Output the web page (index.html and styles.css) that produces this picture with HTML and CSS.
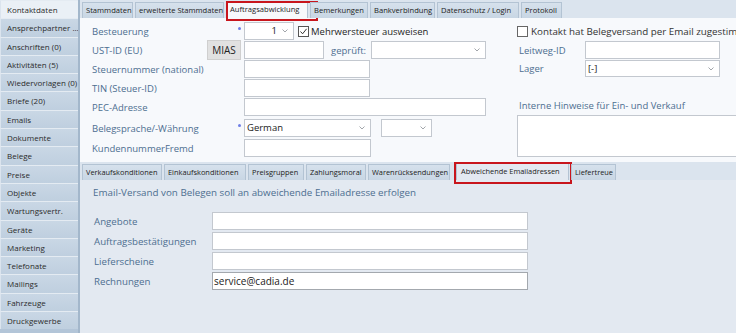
FILE: index.html
```html
<!DOCTYPE html>
<html>
<head>
    <title>Kontaktdaten - Auftragsabwicklung</title>
    <link rel="stylesheet" href="styles.css">
</head>
<body>
    <div class="app">
        <nav class="sidebar">
            <div class="side-item active">Kontaktdaten</div>
            <div class="side-item">Ansprechpartner ...</div>
            <div class="side-item">Anschriften (0)</div>
            <div class="side-item">Aktivitäten (5)</div>
            <div class="side-item">Wiedervorlagen (0)</div>
            <div class="side-item">Briefe (20)</div>
            <div class="side-item">Emails</div>
            <div class="side-item">Dokumente</div>
            <div class="side-item">Belege</div>
            <div class="side-item">Preise</div>
            <div class="side-item">Objekte</div>
            <div class="side-item">Wartungsvertr.</div>
            <div class="side-item">Geräte</div>
            <div class="side-item">Marketing</div>
            <div class="side-item">Telefonate</div>
            <div class="side-item">Mailings</div>
            <div class="side-item">Fahrzeuge</div>
            <div class="side-item">Druckgewerbe</div>
        </nav>

        <main class="main">
            <div class="tabs top-tabs">
                <div class="tab tw-51">Stammdaten</div>
                <div class="tab tw-89">erweiterte Stammdaten</div>
                <div class="tab tw-82 selected marked-top">Auftragsabwicklung</div>
                <div class="tab tw-58">Bemerkungen</div>
                <div class="tab tw-65">Bankverbindung</div>
                <div class="tab tw-82">Datenschutz / Login</div>
                <div class="tab tw-41">Protokoll</div>
            </div>

            <section class="panel-top">
                <div class="form-left">
                    <div class="row">
                        <div class="label">Besteuerung</div>
                        <div class="mark"><span class="dot"></span></div>
                        <div class="select w-50 num">1<span class="chev"><svg width="6" height="4" viewBox="0 0 6 4"><path d="M0.5 0.5 L3 3 L5.5 0.5" fill="none" stroke="#8a8f96" stroke-width="0.8"/></svg></span></div>
                        <label class="check dark"><span class="box"><svg width="9" height="9" viewBox="0 0 9 9"><path d="M1.5 4.5 L3.6 6.8 L7.6 1.8" fill="none" stroke="#333" stroke-width="1"/></svg></span>Mehrwersteuer ausweisen</label>
                    </div>
                    <div class="row">
                        <div class="label with-btn">UST-ID (EU)<button class="mias">MIAS</button></div>
                        <div class="mark"></div>
                        <div class="input w-80"></div>
                        <span class="inline-label">geprüft:</span>
                        <div class="select w-115"><span class="chev"><svg width="6" height="4" viewBox="0 0 6 4"><path d="M0.5 0.5 L3 3 L5.5 0.5" fill="none" stroke="#8a8f96" stroke-width="0.8"/></svg></span></div>
                    </div>
                    <div class="row">
                        <div class="label">Steuernummer (national)</div>
                        <div class="mark"></div>
                        <div class="input w-126"></div>
                    </div>
                    <div class="row">
                        <div class="label">TIN (Steuer-ID)</div>
                        <div class="mark"></div>
                        <div class="input w-126"></div>
                    </div>
                    <div class="row">
                        <div class="label">PEC-Adresse</div>
                        <div class="mark"></div>
                        <div class="input w-242"></div>
                    </div>
                    <div class="row spaced">
                        <div class="label">Belegsprache/-Währung</div>
                        <div class="mark"><span class="dot"></span></div>
                        <div class="select w-127">German<span class="chev"><svg width="6" height="4" viewBox="0 0 6 4"><path d="M0.5 0.5 L3 3 L5.5 0.5" fill="none" stroke="#8a8f96" stroke-width="0.8"/></svg></span></div>
                        <div class="select w-51 gap-10"><span class="chev"><svg width="6" height="4" viewBox="0 0 6 4"><path d="M0.5 0.5 L3 3 L5.5 0.5" fill="none" stroke="#8a8f96" stroke-width="0.8"/></svg></span></div>
                    </div>
                    <div class="row last">
                        <div class="label">KundennummerFremd</div>
                        <div class="mark"></div>
                        <div class="input w-127"></div>
                    </div>
                </div>

                <div class="form-right">
                    <label class="check consent"><span class="box"></span>Kontakt hat Belegversand per Email zugestimmt</label>
                    <div class="row">
                        <div class="label short">Leitweg-ID</div>
                        <div class="input w-135"></div>
                    </div>
                    <div class="row thin">
                        <div class="label short">Lager</div>
                        <div class="select w-135">[-]<span class="chev"><svg width="6" height="4" viewBox="0 0 6 4"><path d="M0.5 0.5 L3 3 L5.5 0.5" fill="none" stroke="#8a8f96" stroke-width="0.8"/></svg></span></div>
                    </div>
                    <div class="notes-label">Interne Hinweise für Ein- und Verkauf</div>
                    <div class="notes"></div>
                </div>
            </section>

            <div class="tabs sub-tabs">
                <div class="tab tw-80">Verkaufskonditionen</div>
                <div class="tab tw-82">Einkaufskonditionen</div>
                <div class="tab tw-56">Preisgruppen</div>
                <div class="tab tw-60">Zahlungsmoral</div>
                <div class="tab tw-82">Warenrücksendungen</div>
                <div class="tab tw-113 selected marked-sub">Abweichende Emailadressen</div>
                <div class="tab tw-45">Liefertreue</div>
            </div>

            <section class="panel-bottom">
                <div class="mail-title">Email-Versand von Belegen soll an abweichende Emailadresse erfolgen</div>
                <div class="mail-form">
                    <div class="mail-row">
                        <div class="mail-label">Angebote</div>
                        <div class="input w-316"></div>
                    </div>
                    <div class="mail-row">
                        <div class="mail-label">Auftragsbestätigungen</div>
                        <div class="input w-316"></div>
                    </div>
                    <div class="mail-row">
                        <div class="mail-label">Lieferscheine</div>
                        <div class="input w-316"></div>
                    </div>
                    <div class="mail-row">
                        <div class="mail-label">Rechnungen</div>
                        <div class="input w-316 focused">service@cadia.de</div>
                    </div>
                </div>
            </section>
        </main>
    </div>
</body>
</html>
```

FILE: styles.css
```css
body {
    margin: 0;
    width: 736px;
    height: 333px;
    overflow: hidden;
    font-family: "Open Sans", "Noto Sans", sans-serif;
    background: #d9e3ed;
}

.app {
    display: flex;
    height: 333px;
}

/* left navigation */
.sidebar {
    width: 78px;
    flex-shrink: 0;
    display: flex;
    flex-direction: column;
    background: #b3c5d8;
    border-right: 2px solid #a3b7cb;
}

.side-item {
    height: 17.3px;
    line-height: 17px;
    padding-left: 6px;
    font-size: 8px;
    color: #2b2b2b;
    white-space: nowrap;
    overflow: hidden;
    background: linear-gradient(#c9d7e5, #bfcfdf);
    border-top: 1px solid #e4ebf2;
    border-left: 1px solid #dbe4ee;
}

.side-item.active {
    background: #eaf0f6;
}

/* main area */
.main {
    flex: 1;
    display: flex;
    flex-direction: column;
    min-width: 0;
}

.tabs {
    display: flex;
    align-items: flex-end;
    gap: 2px;
    padding-left: 2px;
    background: #dbe4ee;
    white-space: nowrap;
}

.top-tabs {
    height: 18px;
}

.sub-tabs {
    height: 18px;
}

.tab {
    position: relative;
    flex-shrink: 0;
    box-sizing: border-box;
    height: 16px;
    line-height: 15px;
    padding: 0 0 0 3px;
    font-size: 7.6px;
    color: #222;
    background: linear-gradient(#d6e1ec, #c8d6e4);
    border: 1px solid #b3c3d3;
    border-bottom: none;
}

.sub-tabs .tab {
    font-size: 7.4px;
}

.tab.selected {
    background: #f7f9fc;
    height: 17px;
}

.sub-tabs .tab.selected {
    background: #e3e9f1;
    margin-left: 4px;
    padding-left: 4px;
}

.tw-41 { width: 41px; }
.tw-45 { width: 45px; }
.tw-51 { width: 51px; }
.tw-56 { width: 56px; }
.tw-58 { width: 58px; }
.tw-60 { width: 60px; }
.tw-65 { width: 65px; }
.tw-80 { width: 80px; }
.tw-82 { width: 82px; }
.tw-89 { width: 89px; }
.tw-113 { width: 113px; }

.marked-top::after,
.marked-sub::after {
    content: "";
    position: absolute;
    border: 2px solid #c8161d;
    pointer-events: none;
}

.marked-top::after {
    left: -1px;
    right: -11px;
    top: -1px;
    bottom: -3px;
}

.marked-sub::after {
    left: -3px;
    right: -4px;
    top: -2px;
    bottom: -4px;
}

/* upper form */
.panel-top {
    height: 144px;
    box-sizing: border-box;
    padding: 4px 0 0 12px;
    background: #f7f9fc;
    display: grid;
    grid-template-columns: 425px 1fr;
    overflow: hidden;
}

.row {
    display: flex;
    align-items: center;
    height: 18px;
    margin-bottom: 1px;
}

.row.spaced {
    margin-top: 3px;
    margin-bottom: 2px;
}

.label {
    width: 146px;
    flex-shrink: 0;
    font-size: 9.5px;
    color: #4d6e90;
    white-space: nowrap;
}

.label.with-btn {
    display: flex;
    align-items: center;
    justify-content: space-between;
}

.label.short {
    width: 66px;
    padding-left: 2px;
}

.mias {
    height: 20px;
    width: 34px;
    margin-right: -3px;
    padding: 0;
    font-family: inherit;
    font-size: 10px;
    color: #222;
    background: #e1e1e1;
    border: 1px solid #cfcfcf;
    position: relative;
    z-index: 1;
}

.mark {
    width: 6px;
    height: 18px;
    flex-shrink: 0;
    position: relative;
}

.dot {
    position: absolute;
    left: 0;
    top: 5px;
    width: 3px;
    height: 3px;
    border-radius: 50%;
    background: #6f7fe6;
}

.input,
.select {
    height: 18px;
    flex-shrink: 0;
    box-sizing: border-box;
    background: #fff;
    border: 1px solid #c3c8cf;
    font-size: 9.5px;
    line-height: 16px;
    color: #1a1a1a;
    padding-left: 2px;
    position: relative;
    white-space: nowrap;
}

.select .chev {
    position: absolute;
    right: 5px;
    top: 6px;
    line-height: 0;
}

.select.num {
    text-align: right;
    padding-right: 16px;
}

.w-50 { width: 50px; }
.w-51 { width: 51px; }
.w-80 { width: 80px; }
.w-115 { width: 115px; }
.w-126 { width: 126px; }
.w-127 { width: 127px; }
.w-135 { width: 135px; }
.w-242 { width: 242px; }
.w-316 { width: 316px; }

.gap-10 {
    margin-left: 10px;
}

.inline-label {
    font-size: 9.5px;
    color: #4d6e90;
    margin: 0 5px 0 7px;
}

.check {
    display: flex;
    align-items: center;
    font-size: 9.5px;
    white-space: nowrap;
}

.check.dark {
    color: #1e1e1e;
    margin-left: 4px;
}

.box {
    width: 9px;
    height: 9px;
    flex-shrink: 0;
    border: 1px solid #555;
    background: #fff;
    margin-right: 2px;
    line-height: 0;
}

/* right column */
.form-right {
    min-width: 0;
    display: flex;
    flex-direction: column;
}

.consent {
    height: 18px;
    margin-bottom: 1px;
    color: #333;
    font-size: 9.8px;
}

.consent .box {
    border-color: #666;
    margin-right: 3px;
}

.row.thin {
    height: 17px;
}

.row.thin .select {
    height: 17px;
}

.notes-label {
    margin-top: 21px;
    padding-left: 2px;
    font-size: 9.5px;
    color: #4d6e90;
    height: 15px;
}

.notes {
    height: 42px;
    box-sizing: border-box;
    background: #fff;
    border: 1px solid #c3c8cf;
    border-right: none;
    margin-top: 1px;
}

/* lower form */
.panel-bottom {
    flex: 1;
    background: #e3e9f1;
    padding: 5px 0 0 13px;
}

.mail-title {
    font-size: 9.8px;
    color: #4d6e90;
    height: 15px;
    line-height: 15px;
}

.mail-form {
    margin-top: 12px;
    display: flex;
    flex-direction: column;
    gap: 2px;
}

.mail-row {
    display: flex;
    align-items: center;
    height: 18px;
}

.mail-label {
    width: 118px;
    padding-left: 1px;
    font-size: 9.7px;
    color: #4d6e90;
}

.input.focused {
    border-color: #a3a8ae;
    font-size: 10px;
    padding-left: 1px;
}
```
